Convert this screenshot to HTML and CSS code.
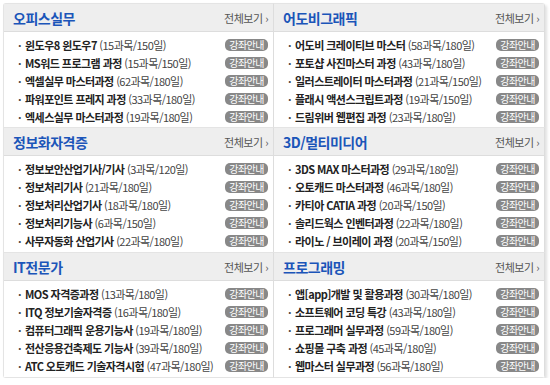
FILE: index.html
```html
<!DOCTYPE html>
<html lang="ko">
<head>
    <meta charset="UTF-8">
    <title>과정안내</title>
    <link rel="stylesheet" href="styles.css">
</head>
<body>
    <div class="board">
        <div class="card">
            <div class="card-head"><h3>오피스실무</h3><a class="more" href="#">전체보기 ›</a></div>
            <ul class="course-list">
                <li><span class="name"><b>윈도우8 윈도우7</b> (15과목/150일)</span><span class="badge">강좌안내</span></li>
                <li><span class="name"><b>MS워드 프로그램 과정</b> (15과목/150일)</span><span class="badge">강좌안내</span></li>
                <li><span class="name"><b>엑셀실무 마스터과정</b> (62과목/180일)</span><span class="badge">강좌안내</span></li>
                <li><span class="name"><b>파워포인트 프레지 과정</b> (33과목/180일)</span><span class="badge">강좌안내</span></li>
                <li><span class="name"><b>엑세스실무 마스터과정</b> (19과목/180일)</span><span class="badge">강좌안내</span></li>
            </ul>
        </div>
        <div class="card">
            <div class="card-head"><h3>어도비그래픽</h3><a class="more" href="#">전체보기 ›</a></div>
            <ul class="course-list">
                <li><span class="name"><b>어도비 크레이티브 마스터</b> (58과목/180일)</span><span class="badge">강좌안내</span></li>
                <li><span class="name"><b>포토샵 사진마스터 과정</b> (43과목/180일)</span><span class="badge">강좌안내</span></li>
                <li><span class="name"><b>일러스트레이터 마스터과정</b> (21과목/150일)</span><span class="badge">강좌안내</span></li>
                <li><span class="name"><b>플래시 액션스크립트과정</b> (19과목/150일)</span><span class="badge">강좌안내</span></li>
                <li><span class="name"><b>드림위버 웹편집 과정</b> (23과목/180일)</span><span class="badge">강좌안내</span></li>
            </ul>
        </div>
        <div class="card">
            <div class="card-head"><h3>정보화자격증</h3><a class="more" href="#">전체보기 ›</a></div>
            <ul class="course-list">
                <li><span class="name"><b>정보보안산업기사/기사</b> (3과목/120일)</span><span class="badge">강좌안내</span></li>
                <li><span class="name"><b>정보처리기사</b> (21과목/180일)</span><span class="badge">강좌안내</span></li>
                <li><span class="name"><b>정보처리산업기사</b> (18과목/180일)</span><span class="badge">강좌안내</span></li>
                <li><span class="name"><b>정보처리기능사</b> (6과목/150일)</span><span class="badge">강좌안내</span></li>
                <li><span class="name"><b>사무자동화 산업기사</b> (22과목/180일)</span><span class="badge">강좌안내</span></li>
            </ul>
        </div>
        <div class="card">
            <div class="card-head"><h3>3D/멀티미디어</h3><a class="more" href="#">전체보기 ›</a></div>
            <ul class="course-list">
                <li><span class="name"><b>3DS MAX 마스터과정</b> (29과목/180일)</span><span class="badge">강좌안내</span></li>
                <li><span class="name"><b>오토캐드 마스터과정</b> (46과목/180일)</span><span class="badge">강좌안내</span></li>
                <li><span class="name"><b>카티아 CATIA 과정</b> (20과목/150일)</span><span class="badge">강좌안내</span></li>
                <li><span class="name"><b>솔리드웍스 인벤터과정</b> (22과목/180일)</span><span class="badge">강좌안내</span></li>
                <li><span class="name"><b>라이노 / 브이레이 과정</b> (20과목/150일)</span><span class="badge">강좌안내</span></li>
            </ul>
        </div>
        <div class="card">
            <div class="card-head"><h3>IT전문가</h3><a class="more" href="#">전체보기 ›</a></div>
            <ul class="course-list">
                <li><span class="name"><b>MOS 자격증과정</b> (13과목/180일)</span><span class="badge">강좌안내</span></li>
                <li><span class="name"><b>ITQ 정보기술자격증</b> (16과목/180일)</span><span class="badge">강좌안내</span></li>
                <li><span class="name"><b>컴퓨터그래픽 운용기능사</b> (19과목/180일)</span><span class="badge">강좌안내</span></li>
                <li><span class="name"><b>전산응용건축제도 기능사</b> (39과목/180일)</span><span class="badge">강좌안내</span></li>
                <li><span class="name"><b>ATC 오토캐드 기술자격시험</b> (47과목/180일)</span><span class="badge">강좌안내</span></li>
            </ul>
        </div>
        <div class="card">
            <div class="card-head"><h3>프로그래밍</h3><a class="more" href="#">전체보기 ›</a></div>
            <ul class="course-list">
                <li><span class="name"><b>앱[app]개발 및 활용과정</b> (30과목/180일)</span><span class="badge">강좌안내</span></li>
                <li><span class="name"><b>소프트웨어 코딩 특강</b> (43과목/180일)</span><span class="badge">강좌안내</span></li>
                <li><span class="name"><b>프로그래머 실무과정</b> (59과목/180일)</span><span class="badge">강좌안내</span></li>
                <li><span class="name"><b>쇼핑몰 구축 과정</b> (45과목/180일)</span><span class="badge">강좌안내</span></li>
                <li><span class="name"><b>웹마스터 실무과정</b> (56과목/180일)</span><span class="badge">강좌안내</span></li>
            </ul>
        </div>
    </div>
</body>
</html>
```

FILE: styles.css
```css
body {
    margin: 0;
    padding: 3px 0 0 3px;
    background: #ffffff;
    font-family: "Noto Sans CJK KR", "Noto Sans", sans-serif;
    color: #333333;
}
.board {
    display: grid;
    grid-template-columns: 271px 271px;
    width: 542px;
    box-shadow: 2px 2px 3px rgba(0, 0, 0, 0.12);
    border-radius: 3px;
    overflow: hidden;
}
.card {
    height: 125px;
    border-right: 1px solid #dddddd;
    border-bottom: 1px solid #e4e4e4;
    box-sizing: border-box;
    background: #ffffff;
}
.card:nth-child(odd) {
    border-left: 1px solid #e4e4e4;
}
.card:nth-child(-n+2) {
    border-top: 1px solid #e4e4e4;
}
.card-head {
    display: flex;
    justify-content: space-between;
    align-items: center;
    height: 27px;
    padding: 0 5px 0 9px;
    background: #eeeeee;
    border-bottom: 1px solid #dddddd;
}
.card-head h3 {
    margin: 0;
    font-size: 14px;
    font-weight: bold;
    letter-spacing: -0.5px;
    color: #1b55b9;
}
.more {
    font-size: 11px;
    letter-spacing: -0.5px;
    color: #555555;
    text-decoration: none;
}
.course-list {
    list-style: none;
    margin: 0;
    padding: 4px 5px 0 14px;
}
.course-list li {
    display: flex;
    justify-content: space-between;
    align-items: center;
    height: 18px;
}
.name {
    font-size: 11px;
    letter-spacing: -0.55px;
    color: #444444;
}
.name::before {
    content: "·";
    display: inline-block;
    width: 7px;
    font-weight: bold;
}
.name b {
    color: #222222;
}
.badge {
    font-size: 10px;
    line-height: 12px;
    padding: 0 4px;
    border-radius: 5px;
    background: #888888;
    color: #ffffff;
    letter-spacing: -0.5px;
}
```
